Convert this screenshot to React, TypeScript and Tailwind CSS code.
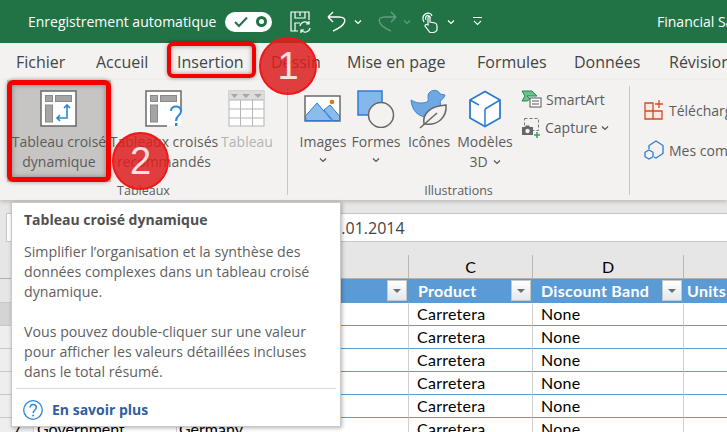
import React from 'react';

const ui = "font-['Open_Sans',sans-serif]";
const cell = "font-['Lato',sans-serif]";

const TABS = [
  { label: 'Fichier', w: 'w-[80px]' },
  { label: 'Accueil', w: 'w-[81px]' },
  { label: 'Insertion', w: 'w-[94px]' },
  { label: 'Dessin', w: 'w-[76px]' },
  { label: 'Mise en page', w: 'w-[130px]' },
  { label: 'Formules', w: 'w-[97px]' },
  { label: 'Données', w: 'w-[95px]' },
  { label: 'Révision', w: 'w-[80px]' },
];

const Chevron = ({ color = '#555', size = 8 }: { color?: string; size?: number }) => (
  <svg width={size} height={size} viewBox="0 0 8 8" fill="none" className="shrink-0">
    <path d="M1 2.5 L4 5.5 L7 2.5" stroke={color} strokeWidth="1.2" />
  </svg>
);

const PivotBase = ({ children, open }: { children?: React.ReactNode; open?: boolean }) => (
  <svg width="38" height="38" viewBox="0 0 38 38" fill="none">
    <rect x="1" y="1" width="35" height="35" fill="#fff" />
    <path d={open ? 'M22 36 H1 V1 H36 V21' : 'M1 1 H36 V36 H1 Z'} stroke="#6a6a6a" strokeWidth="1.5" />
    <rect x="5.5" y="5.5" width="7" height="6" fill="#a5a5a5" stroke="#8a8a8a" />
    <rect x="15.5" y="5.5" width="16" height="6" fill="#a5a5a5" stroke="#8a8a8a" />
    <rect x="5.5" y="15" width="7" height="17" fill="#a5a5a5" stroke="#8a8a8a" />
    {children}
  </svg>
);

const PivotIcon = () => (
  <PivotBase>
    <path d="M27 15 V28 H17 M24 18 L27 15 L30 18 M20 25 L17 28 L20 31" stroke="#2b88d8" strokeWidth="1.6" />
  </PivotBase>
);

const RecommendIcon = () => (
  <PivotBase open>
    <path d="M26 21 C26 15 36 15 36 21 C36 26 31 25 31 31" stroke="#2b88d8" strokeWidth="2" />
    <rect x="30" y="33" width="2.4" height="3" fill="#2b88d8" />
  </PivotBase>
);

const TableIcon = () => (
  <svg width="38" height="38" viewBox="0 0 38 38" fill="none">
    <rect x="1" y="1" width="35" height="35" fill="#fff" stroke="#b5b5b5" />
    <rect x="1" y="1" width="35" height="9" fill="#dcdcdc" />
    <path d="M3 4 H10 L6.500 8 Z M14 4 H22 L18 8 Z M26 4 H34 L30 8 Z" fill="#a8a8a8" />
    <path d="M1 10 H36 M1 19 H36 M1 28 H36 M12.500 10 V36 M24.500 10 V36" stroke="#b5b5b5" />
  </svg>
);

const ImagesIcon = () => (
  <svg width="38" height="28" viewBox="0 0 38 28" fill="none">
    <rect x="1" y="1" width="35" height="25" fill="#fff" stroke="#6a6a6a" strokeWidth="1.5" />
    <path d="M1.500 21 L13 8 L28 25.500 H2 Z" fill="#8cbcec" stroke="#2b7cd3" />
    <path d="M20 15 L26 10 L35.500 21 V25.500 H29 Z" fill="#8cbcec" stroke="#2b7cd3" />
    <circle cx="28" cy="7" r="2.300" fill="#e8750e" />
  </svg>
);

const FormesIcon = () => (
  <svg width="38" height="38" viewBox="0 0 38 38" fill="none">
    <rect x="1" y="1" width="24" height="24" fill="#85b8ea" stroke="#2b7cd3" strokeWidth="1.5" />
    <circle cx="24" cy="25" r="12.500" fill="#f3f2f1" stroke="#666" strokeWidth="1.500" />
  </svg>
);

const IconesIcon = () => (
  <svg width="38" height="40" viewBox="0 0 38 40" fill="none">
    <path d="M1 11 C6 14 11 15 17 13 C19 12 18 10 18 7 C18 1 28 -1 30 5 L35 6 C34 9 32 11 30 12 C32 18 28 27 18 28 C8 28 2 22 1 11 Z" fill="#6fa8e0" stroke="#3a86d4" />
    <path d="M14 35 C12 25 20 17 36 16 C37 28 28 37 15 35 Z" fill="#f3f2f1" stroke="#666" strokeWidth="1.500" />
    <path d="M10 39 L27 24" stroke="#666" strokeWidth="1.500" />
  </svg>
);

const CubeIcon = () => (
  <svg width="34" height="38" viewBox="0 0 34 38" fill="none">
    <path d="M17 1.500 L32 10 V28 L17 36.500 L2 28 V10 Z" fill="#fff" stroke="#2b7cd3" strokeWidth="1.800" />
    <path d="M2 10 L11 15 M17 19 L32 10 M17 19 V36" stroke="#2b7cd3" strokeWidth="1.500" />
  </svg>
);

const SmartArtIcon = () => (
  <svg width="21" height="18" viewBox="0 0 21 18" fill="none" className="shrink-0">
    <path d="M1 1 H11 L16 6 H6 L9 9 L6 11 H1 L4 6 Z" fill="#6cc08b" stroke="#218a50" />
    <rect x="9" y="8" width="11" height="9" fill="#fff" stroke="#555" />
    <path d="M11 11 H18 M11 14 H18" stroke="#555" />
  </svg>
);

const CaptureIcon = () => (
  <svg width="20" height="20" viewBox="0 0 20 20" fill="none" className="shrink-0">
    <rect x="3.500" y="0.500" width="14" height="12" stroke="#777" strokeDasharray="3 2" />
    <path d="M1 9 H4 L5 7.500 H8 L9 9 H12 V17 H1 Z" fill="#666" />
    <circle cx="6.500" cy="13" r="2.200" fill="#f3f2f1" />
    <path d="M16 14 V20 M13 17 H19" stroke="#3aa35f" strokeWidth="1.600" />
  </svg>
);

const AddinIcon = () => (
  <svg width="20" height="20" viewBox="0 0 20 20" fill="none" className="shrink-0">
    <path d="M1 3 H9 V11 H1 Z M1 11 H9 V19 H1 Z M9 11 H18 V19 H9 Z" stroke="#d8491f" strokeWidth="1.300" fill="#fbe9e3" />
    <path d="M15 0 V8 M11 4 H19" stroke="#d8491f" strokeWidth="1.300" />
  </svg>
);

const MyAddinIcon = () => (
  <svg width="20" height="20" viewBox="0 0 20 20" fill="none" className="shrink-0">
    <path d="M5 9 V5.500 L12 1 L19 5.500 V13.500 L12 18 L10 17" stroke="#2b7cd3" strokeWidth="1.300" />
    <path d="M5 11 L9 13.300 V17.700 L5 20 L1 17.700 V13.300 Z" stroke="#2b7cd3" strokeWidth="1.300" transform="translate(0 -1)" />
  </svg>
);

const LargeButton = ({ width, icon, lines, chevron, muted, active }: {
  width: string;
  icon: React.ReactNode;
  lines: string[];
  chevron?: 'below' | 'inline';
  muted?: boolean;
  active?: boolean;
}) => (
  <div className={`${width} flex flex-col items-center shrink-0 ${active ? '-mt-[9px] pt-[9px] h-[102px] bg-[#c6c5c3]' : ''}`}>
    <div className="h-[40px] flex items-center justify-center">{icon}</div>
    <div className={`mt-[3px] text-[14px] leading-[20px] text-center whitespace-nowrap ${muted ? 'text-[#b4b4b4]' : 'text-[#5c5c5c]'}`}>
      {lines.map((line, i) => (
        <div key={line} className="flex items-center justify-center gap-[5px]">
          {line}
          {chevron === 'inline' && i === lines.length - 1 && <Chevron />}
        </div>
      ))}
      {chevron === 'below' && <div className="h-[16px] flex items-center justify-center"><Chevron /></div>}
    </div>
  </div>
);

const GroupLabel = ({ children }: { children: string }) => (
  <div className="mt-auto text-center text-[12.5px] leading-[18px] text-[#5c5c5c]">{children}</div>
);

const Separator = () => <div className="w-px shrink-0 mt-[6px] mb-[5px] bg-[#c8c6c4]" />;

const FilterButton = () => (
  <div className="absolute right-[1px] top-[1px] w-[20px] h-[21px] bg-gradient-to-b from-white to-[#e4e7ec] border border-[#c6c6c6] flex items-center justify-center">
    <div className="w-0 h-0 border-l-[4px] border-r-[4px] border-t-[4px] border-l-transparent border-r-transparent border-t-[#6e6e6e]" />
  </div>
);

const ROWS = [2, 3, 4, 5, 6, 7];

export default function App() {
  return (
    <div className={`relative w-[727px] h-[432px] overflow-hidden bg-white flex flex-col ${ui}`}>
      {/* Title bar */}
      <div className="h-[43px] shrink-0 bg-[#217346] flex items-center text-white overflow-hidden">
        <span className="ml-[28px] w-[197px] shrink-0 text-[14px] whitespace-nowrap">Enregistrement automatique</span>
        <div className="w-[47px] h-[20px] shrink-0 rounded-full bg-white flex items-center justify-between pl-[9px] pr-[5px]">
          <svg width="14" height="12" viewBox="0 0 14 12" fill="none"><path d="M1 6 L5 10 L13 1.500" stroke="#217346" strokeWidth="2" /></svg>
          <div className="w-[11px] h-[11px] rounded-full border-[3px] border-[#217346]" />
        </div>
        <svg className="ml-[18px] shrink-0" width="21" height="22" viewBox="0 0 21 22" fill="none">
          <path d="M8 20 H1 V1 H19 V9 M5 1 V7 H15 V1 M5 20 V12 H10 M10 1 V5" stroke="#fff" strokeWidth="1.200" />
          <path d="M10 15 A5 5 0 0 1 19 13 M20 17 A5 5 0 0 1 11 19 M19 10 V13 H16 M11 22 V19 H14" stroke="#fff" strokeWidth="1.200" />
        </svg>
        <svg className="ml-[16px] shrink-0" width="20" height="22" viewBox="0 0 20 22" fill="none">
          <path d="M1 7 L6 12 M1 7 L6 2 M1 7 H12 C21 7 20 15 6 21" stroke="#fff" strokeWidth="1.400" transform="translate(0 -1)" />
        </svg>
        <div className="ml-[7px]"><Chevron color="#fff" /></div>
        <svg className="ml-[15px] opacity-30 shrink-0" width="20" height="22" viewBox="0 0 20 22" fill="none">
          <path d="M19 7 L14 12 M19 7 L14 2 M19 7 H8 C-1 7 0 15 14 21" stroke="#fff" strokeWidth="1.400" transform="translate(0 -1)" />
        </svg>
        <div className="ml-[6px] opacity-30"><Chevron color="#fff" /></div>
        <svg className="ml-[10px] shrink-0" width="17" height="22" viewBox="0 0 17 22" fill="none">
          <path d="M3 11 C-1 3 9 -1 11 5 M5 9 C3 4 9 3 9 7" stroke="#fff" strokeWidth="1.200" />
          <path d="M7 14 V6.500 C7 5 9 5 9 6.500 V11 L14 12 C16 12.500 16 14 16 15 V19 C15 21 14 21.500 12 21.500 H9 L4 15 C4 13.500 5.500 13 7 14 Z" fill="#217346" stroke="#fff" strokeWidth="1.200" />
        </svg>
        <div className="ml-[9px]"><Chevron color="#fff" /></div>
        <svg className="ml-[18px] shrink-0" width="9" height="9" viewBox="0 0 9 9" fill="none">
          <path d="M0 0.500 H9 M1 4 L4.500 7.500 L8 4" stroke="#fff" strokeWidth="1.100" />
        </svg>
        <span className="ml-[175px] shrink-0 text-[14px] whitespace-nowrap">Financial Sample</span>
      </div>

      {/* Tabs */}
      <div className="h-[37px] shrink-0 bg-[#f3f2f1] flex items-center pl-[16px] text-[16px] text-[#444] whitespace-nowrap overflow-hidden">
        {TABS.map(tab => (
          <span key={tab.label} className={`${tab.w} shrink-0`}>{tab.label}</span>
        ))}
      </div>

      {/* Ribbon */}
      <div className="h-[120px] shrink-0 bg-[#f3f2f1] flex shadow-[0_2px_4px_rgba(0,0,0,0.18)] z-10">
        <div className="w-[287px] shrink-0 flex flex-col pt-[9px]">
          <div className="flex pl-[7px]">
            <LargeButton width="w-[104px]" icon={<PivotIcon />} lines={['Tableau croisé', 'dynamique']} active />
            <LargeButton width="w-[106px]" icon={<RecommendIcon />} lines={['Tableaux croisés', 'recommandés']} />
            <LargeButton width="w-[60px]" icon={<TableIcon />} lines={['Tableau']} muted />
          </div>
          <GroupLabel>Tableaux</GroupLabel>
        </div>
        <Separator />
        <div className="w-[341px] shrink-0 flex flex-col pt-[9px]">
          <div className="flex pl-[12px]">
            <LargeButton width="w-[46px]" icon={<ImagesIcon />} lines={['Images']} chevron="below" />
            <LargeButton width="w-[60px]" icon={<FormesIcon />} lines={['Formes']} chevron="below" />
            <LargeButton width="w-[46px]" icon={<IconesIcon />} lines={['Icônes']} />
            <LargeButton width="w-[66px]" icon={<CubeIcon />} lines={['Modèles', '3D']} chevron="inline" />
            <div className="ml-[3px] flex flex-col text-[14px] text-[#5c5c5c] whitespace-nowrap">
              <div className="h-[20px] flex items-center gap-[4px]"><SmartArtIcon /> SmartArt</div>
              <div className="mt-[8px] h-[21px] flex items-center gap-[4px]"><CaptureIcon /> Capture <Chevron /></div>
            </div>
          </div>
          <GroupLabel>Illustrations</GroupLabel>
        </div>
        <Separator />
        <div className="pl-[14px] pt-[20px] flex-1 min-w-0 flex flex-col gap-[20px] text-[14px] text-[#5c5c5c] whitespace-nowrap overflow-hidden">
          <div className="flex items-center gap-[5px] h-[20px]"><AddinIcon /> Télécharger des compléments</div>
          <div className="flex items-center gap-[5px] h-[20px]"><MyAddinIcon /> Mes compléments</div>
        </div>
      </div>

      {/* Formula bar */}
      <div className="h-[55px] shrink-0 bg-[#e6e6e6] pt-[13px] pb-[13px] flex pl-[6px]">
        <div className="w-[60px] bg-white border border-[#c6c6c6]" />
        <div className="flex-1 ml-[8px] bg-white border-y border-[#c6c6c6] pl-[249px] text-[16px] leading-[28px] text-[#444]">01.01.2014</div>
      </div>

      {/* Sheet */}
      <div className={`flex-1 grid grid-cols-[33px_143px_232px_124px_151px_44px] grid-rows-[23px_24px_repeat(6,23px)] text-[16px] text-black ${cell}`}>
        <div className="bg-[#e6e6e6]" />
        <div className="bg-[#e6e6e6] border-l border-[#b8b8b8] text-center leading-[23px]">A</div>
        <div className="bg-[#e6e6e6] border-l border-[#b8b8b8] text-center leading-[23px]">B</div>
        <div className="bg-[#e6e6e6] border-l border-[#b8b8b8] text-center leading-[23px]">C</div>
        <div className="bg-[#e6e6e6] border-l border-[#b8b8b8] text-center leading-[23px]">D</div>
        <div className="bg-[#e6e6e6] border-l border-[#b8b8b8]" />

        <div className="bg-[#e6e6e6] border-t border-[#b0b0b0] text-center leading-[23px]">1</div>
        <div className="relative bg-[#5b9bd5] border-t border-[#b0b0b0]"><FilterButton /></div>
        <div className="relative bg-[#5b9bd5] border-t border-[#b0b0b0]"><FilterButton /></div>
        <div className="relative bg-[#5b9bd5] border-t border-[#b0b0b0] pl-[10px] font-bold text-white leading-[23px] tracking-[0.3px]">Product<FilterButton /></div>
        <div className="relative bg-[#5b9bd5] border-t border-[#b0b0b0] pl-[9px] font-bold text-white leading-[23px] tracking-[0.3px]">Discount Band<FilterButton /></div>
        <div className="bg-[#5b9bd5] border-t border-[#b0b0b0] pl-[4px] font-bold text-white leading-[23px] tracking-[0.3px] whitespace-nowrap overflow-hidden">Units Sold</div>

        {ROWS.map(row => (
          <React.Fragment key={row}>
            <div className={`${row === 2 ? 'bg-[#d4d4d4]' : 'bg-[#eeeeee]'} border-t border-[#c8c8c8] text-center leading-[23px]`}>{row}</div>
            <div className="border-t border-l border-t-[#5b9bd5] border-l-[#d0d0d0] pl-[3px] leading-[21px]">{row === 7 ? 'Government' : ''}</div>
            <div className="border-t border-l border-t-[#5b9bd5] border-l-[#d0d0d0] pl-[2px] leading-[21px]">{row === 7 ? 'Germany' : ''}</div>
            <div className="border-t border-l border-t-[#5b9bd5] border-l-[#d0d0d0] pl-[8px] leading-[21px] tracking-[0.25px]">Carretera</div>
            <div className="border-t border-l border-t-[#5b9bd5] border-l-[#d0d0d0] pl-[8px] leading-[21px] tracking-[0.25px]">None</div>
            <div className="border-t border-l border-t-[#5b9bd5] border-l-[#d0d0d0]" />
          </React.Fragment>
        ))}
      </div>

      {/* Red frames drawn over the ribbon */}
      <div className="absolute z-20 left-[7px] top-[80px] w-[104px] h-[102px] rounded-[6px] border-[5px] border-[#f40000] shadow-[0_0_4px_rgba(0,0,0,0.4),inset_0_0_5px_rgba(0,0,0,0.35)]" />
      <div className="absolute z-20 left-[167px] top-[42px] w-[89px] h-[36px] rounded-[6px] border-[4px] border-[#f40000] shadow-[0_0_4px_rgba(0,0,0,0.4),inset_0_0_5px_rgba(0,0,0,0.4)]" />

      {/* Numbered markers */}
      <div className="absolute z-20 left-[259px] top-[37px] w-[58px] h-[58px] rounded-full bg-[#dc1e1e]/85 border-2 border-[#f01818] flex items-center justify-center text-[38px] text-white/85 font-['Liberation_Sans',sans-serif]">1</div>
      <div className="absolute z-20 left-[112px] top-[132px] w-[57px] h-[58px] rounded-full bg-[#dc1e1e]/85 border-2 border-[#f01818] flex items-center justify-center text-[38px] text-white/85 font-['Liberation_Sans',sans-serif]">2</div>

      {/* Tooltip */}
      <div className="absolute z-20 left-[11px] top-[202px] w-[330px] h-[225px] bg-white border border-[#c8c8c8] shadow-[1px_1px_4px_rgba(0,0,0,0.3)] flex flex-col text-[14.2px] text-[#5f5f5f]">
        <div className="pl-[12px] pt-[7px] leading-[20px] font-bold text-[#505050] text-[14px]">Tableau croisé dynamique</div>
        <div className="pl-[12px] pt-[12px] leading-[20px] whitespace-nowrap">
          <div>Simplifier l’organisation et la synthèse des</div>
          <div>données complexes dans un tableau croisé</div>
          <div>dynamique.</div>
          <div className="h-[20px]" />
          <div>Vous pouvez double-cliquer sur une valeur</div>
          <div>pour afficher les valeurs détaillées incluses</div>
          <div>dans le total résumé.</div>
        </div>
        <div className="mx-[4px] mt-[6px] border-t border-[#dcdcdc] flex items-center h-[38px] pt-[4px] pl-[7px] gap-[9px]">
          <svg width="20" height="20" viewBox="0 0 20 20" fill="none">
            <circle cx="10" cy="10" r="9.300" stroke="#2b88d8" strokeWidth="1.300" />
            <path d="M7 7.500 C7 3.500 13.300 3.800 13.300 7.500 C13.300 10 10.200 10 10.200 13" stroke="#2b88d8" strokeWidth="1.500" />
            <circle cx="10.200" cy="15.500" r="1" fill="#2b88d8" />
          </svg>
          <span className="font-bold text-[#2f5f9e] text-[14px]">En savoir plus</span>
        </div>
      </div>
    </div>
  );
}
